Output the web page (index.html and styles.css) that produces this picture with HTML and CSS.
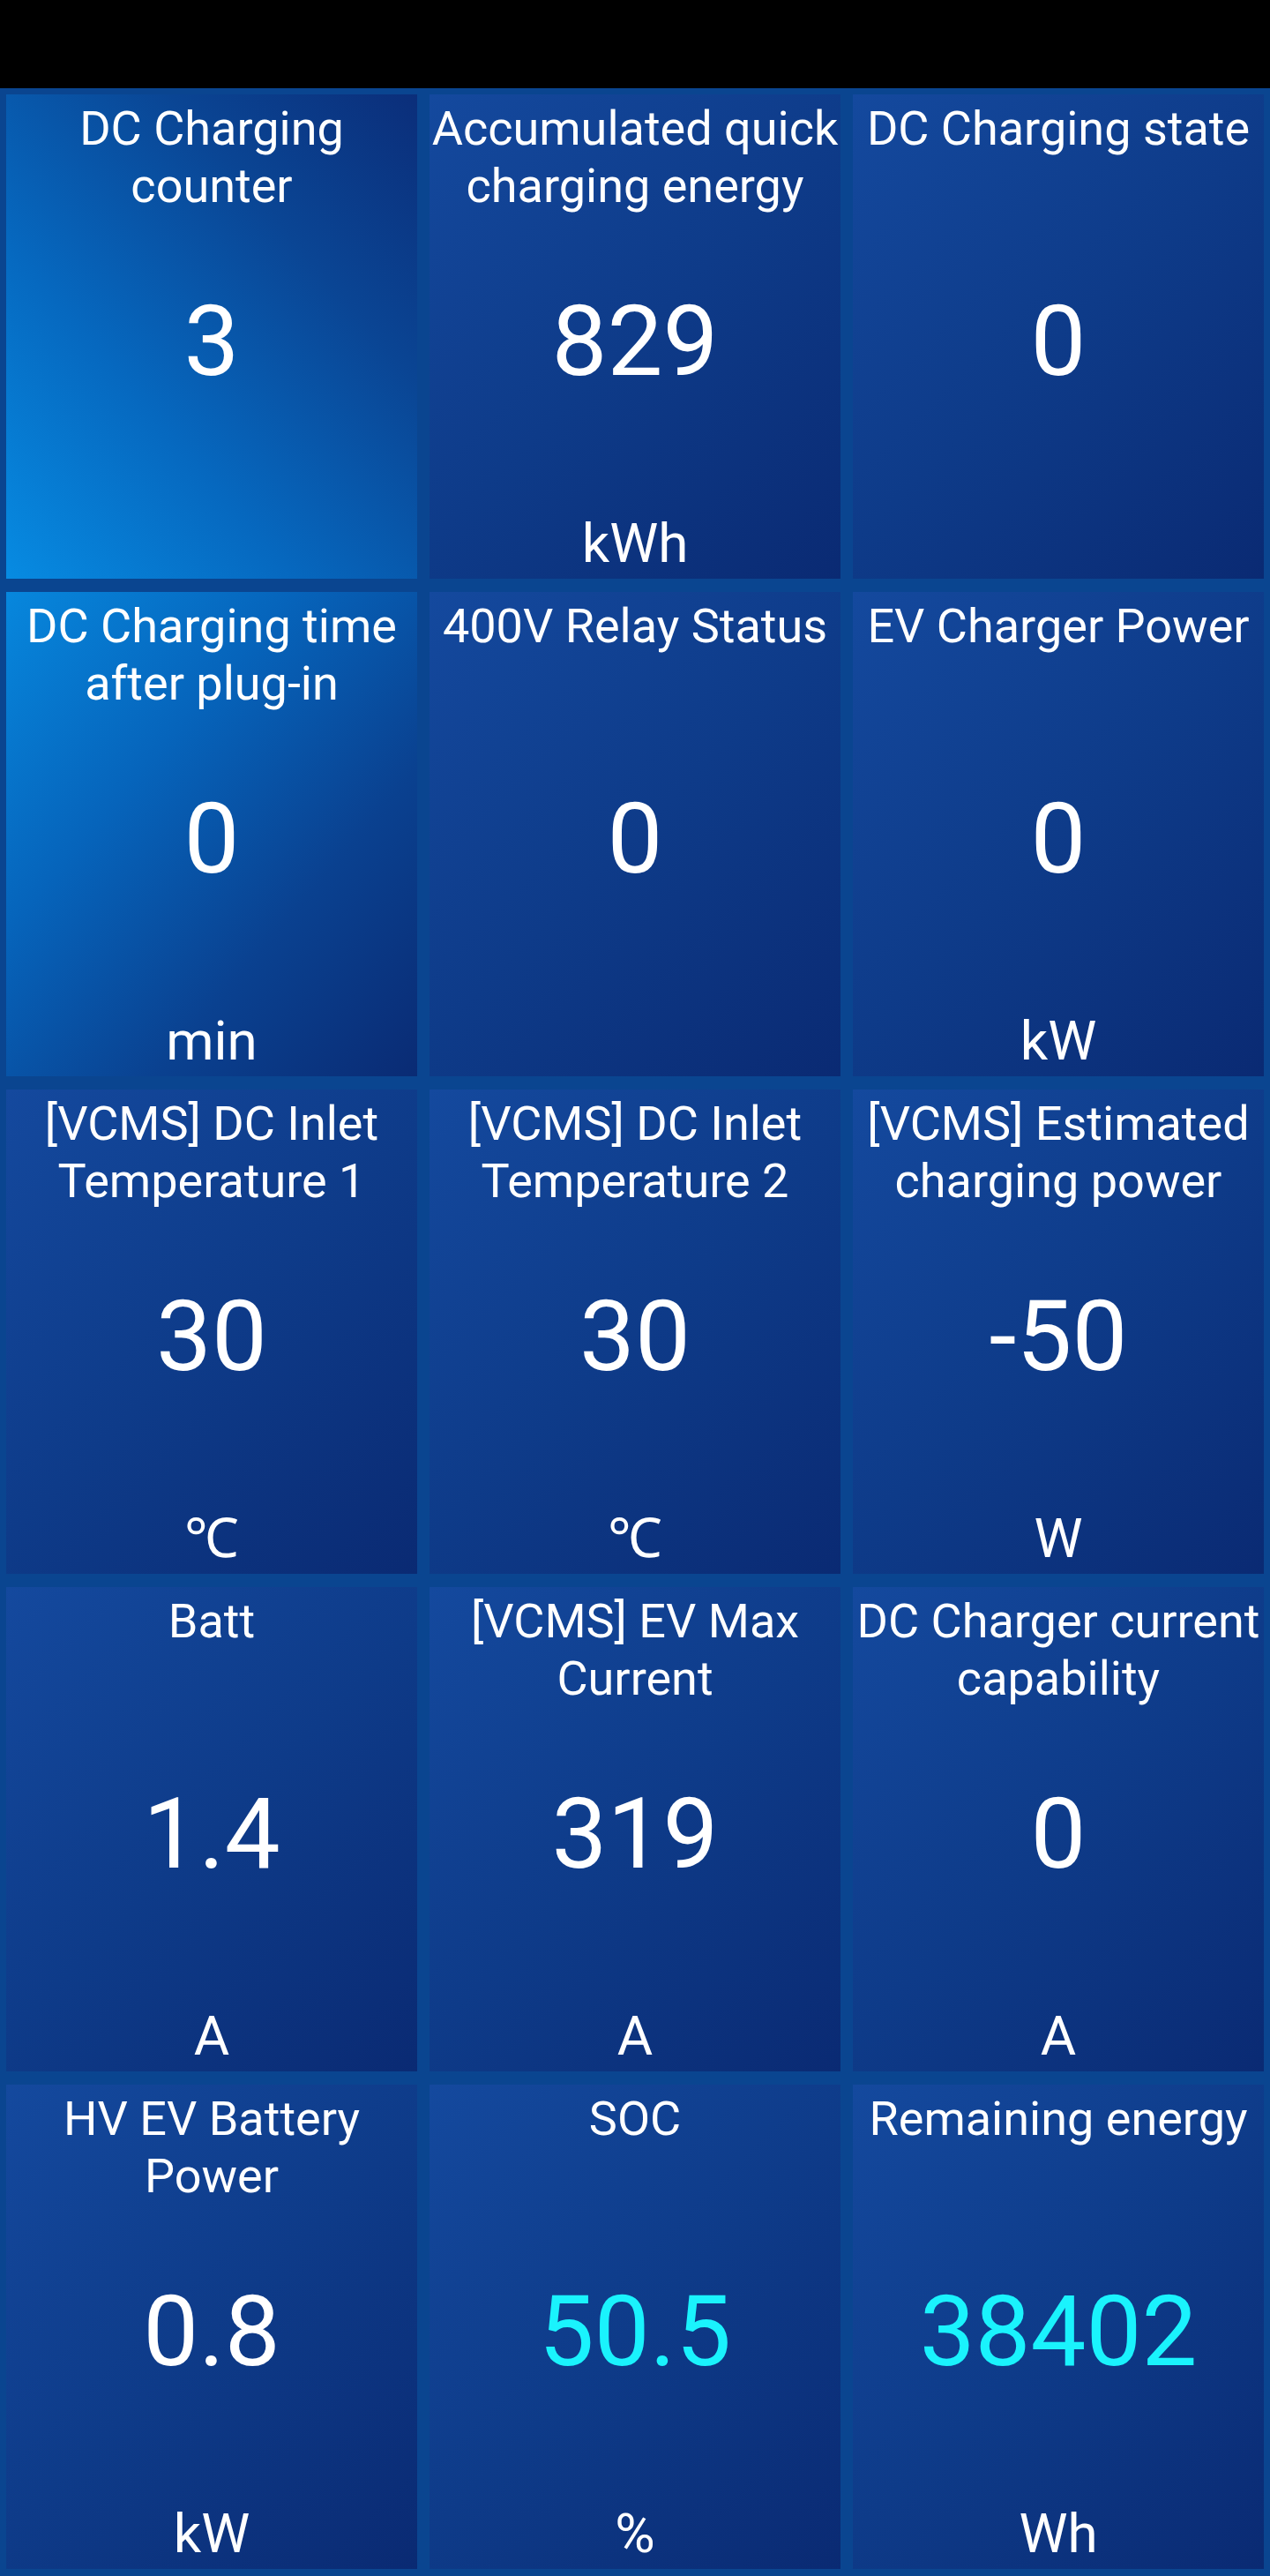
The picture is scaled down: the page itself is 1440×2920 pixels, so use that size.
FILE: index.html
```html
<!DOCTYPE html>
<html lang="en">
  <head>
    <meta charset="UTF-8" />
    <meta name="viewport" content="width=device-width, initial-scale=1.0" />
    <title>DC Charging</title>
    <link rel="stylesheet" href="styles.css">
  </head>
  <body>
    <div class="status-bar"></div>

    <div class="grid">
      <div class="cell glow-up">
        <div class="title">DC Charging counter</div>
        <div class="value">3</div>
        <div class="unit"></div>
      </div>
      <div class="cell">
        <div class="title">Accumulated quick charging energy</div>
        <div class="value">829</div>
        <div class="unit">kWh</div>
      </div>
      <div class="cell">
        <div class="title">DC Charging state</div>
        <div class="value">0</div>
        <div class="unit"></div>
      </div>

      <div class="cell glow-down">
        <div class="title">DC Charging time after plug-in</div>
        <div class="value">0</div>
        <div class="unit">min</div>
      </div>
      <div class="cell">
        <div class="title">400V Relay Status</div>
        <div class="value">0</div>
        <div class="unit"></div>
      </div>
      <div class="cell">
        <div class="title">EV Charger Power</div>
        <div class="value">0</div>
        <div class="unit">kW</div>
      </div>

      <div class="cell">
        <div class="title">[VCMS] DC Inlet Temperature 1</div>
        <div class="value">30</div>
        <div class="unit">℃</div>
      </div>
      <div class="cell">
        <div class="title">[VCMS] DC Inlet Temperature 2</div>
        <div class="value">30</div>
        <div class="unit">℃</div>
      </div>
      <div class="cell">
        <div class="title">[VCMS] Estimated charging power</div>
        <div class="value">-50</div>
        <div class="unit">W</div>
      </div>

      <div class="cell">
        <div class="title">Batt</div>
        <div class="value">1.4</div>
        <div class="unit">A</div>
      </div>
      <div class="cell">
        <div class="title">[VCMS] EV Max Current</div>
        <div class="value">319</div>
        <div class="unit">A</div>
      </div>
      <div class="cell">
        <div class="title">DC Charger current capability</div>
        <div class="value">0</div>
        <div class="unit">A</div>
      </div>

      <div class="cell">
        <div class="title">HV EV Battery Power</div>
        <div class="value">0.8</div>
        <div class="unit">kW</div>
      </div>
      <div class="cell">
        <div class="title">SOC</div>
        <div class="value highlight">50.5</div>
        <div class="unit">%</div>
      </div>
      <div class="cell">
        <div class="title">Remaining energy</div>
        <div class="value highlight">38402</div>
        <div class="unit">Wh</div>
      </div>
    </div>
  </body>
</html>
```

FILE: styles.css
```css
* {
  box-sizing: border-box;
}
body {
  margin: 0;
  background: #0a4590;
  font-family: Roboto, 'Noto Sans', 'DejaVu Sans', sans-serif;
  color: #fff;
  text-align: center;
}
.status-bar {
  height: 100px;
  background: #000;
}
.grid {
  display: grid;
  grid-template-columns: repeat(3, 466px);
  grid-auto-rows: 549px;
  column-gap: 14px;
  row-gap: 15px;
  padding: 7px 7px 8px;
}
.cell {
  display: grid;
  grid-template: 1fr / 1fr;
  background: linear-gradient(135deg, #14499e 0%, #0e3b89 50%, #0a2a73 100%);
  overflow: hidden;
}
.cell > div {
  grid-area: 1 / 1;
}
.glow-up {
  background: linear-gradient(to top right, #078be2 0%, #0668bf 35%, #0a4594 70%, #0b2e7a 100%);
}
.glow-down {
  background: linear-gradient(to bottom right, #0787dd 0%, #0664bb 35%, #0a4190 68%, #0a2b74 100%);
}
.title {
  align-self: start;
  font-size: 54px;
  line-height: 65px;
  padding: 6px 2px 0;
}
.value {
  align-self: center;
  font-size: 112px;
  line-height: 1.2;
  margin-top: 12px;
}
.value.highlight {
  color: #1af3fd;
}
.unit {
  align-self: end;
  font-size: 62px;
  line-height: 1.2;
  padding-bottom: 3px;
}
```
